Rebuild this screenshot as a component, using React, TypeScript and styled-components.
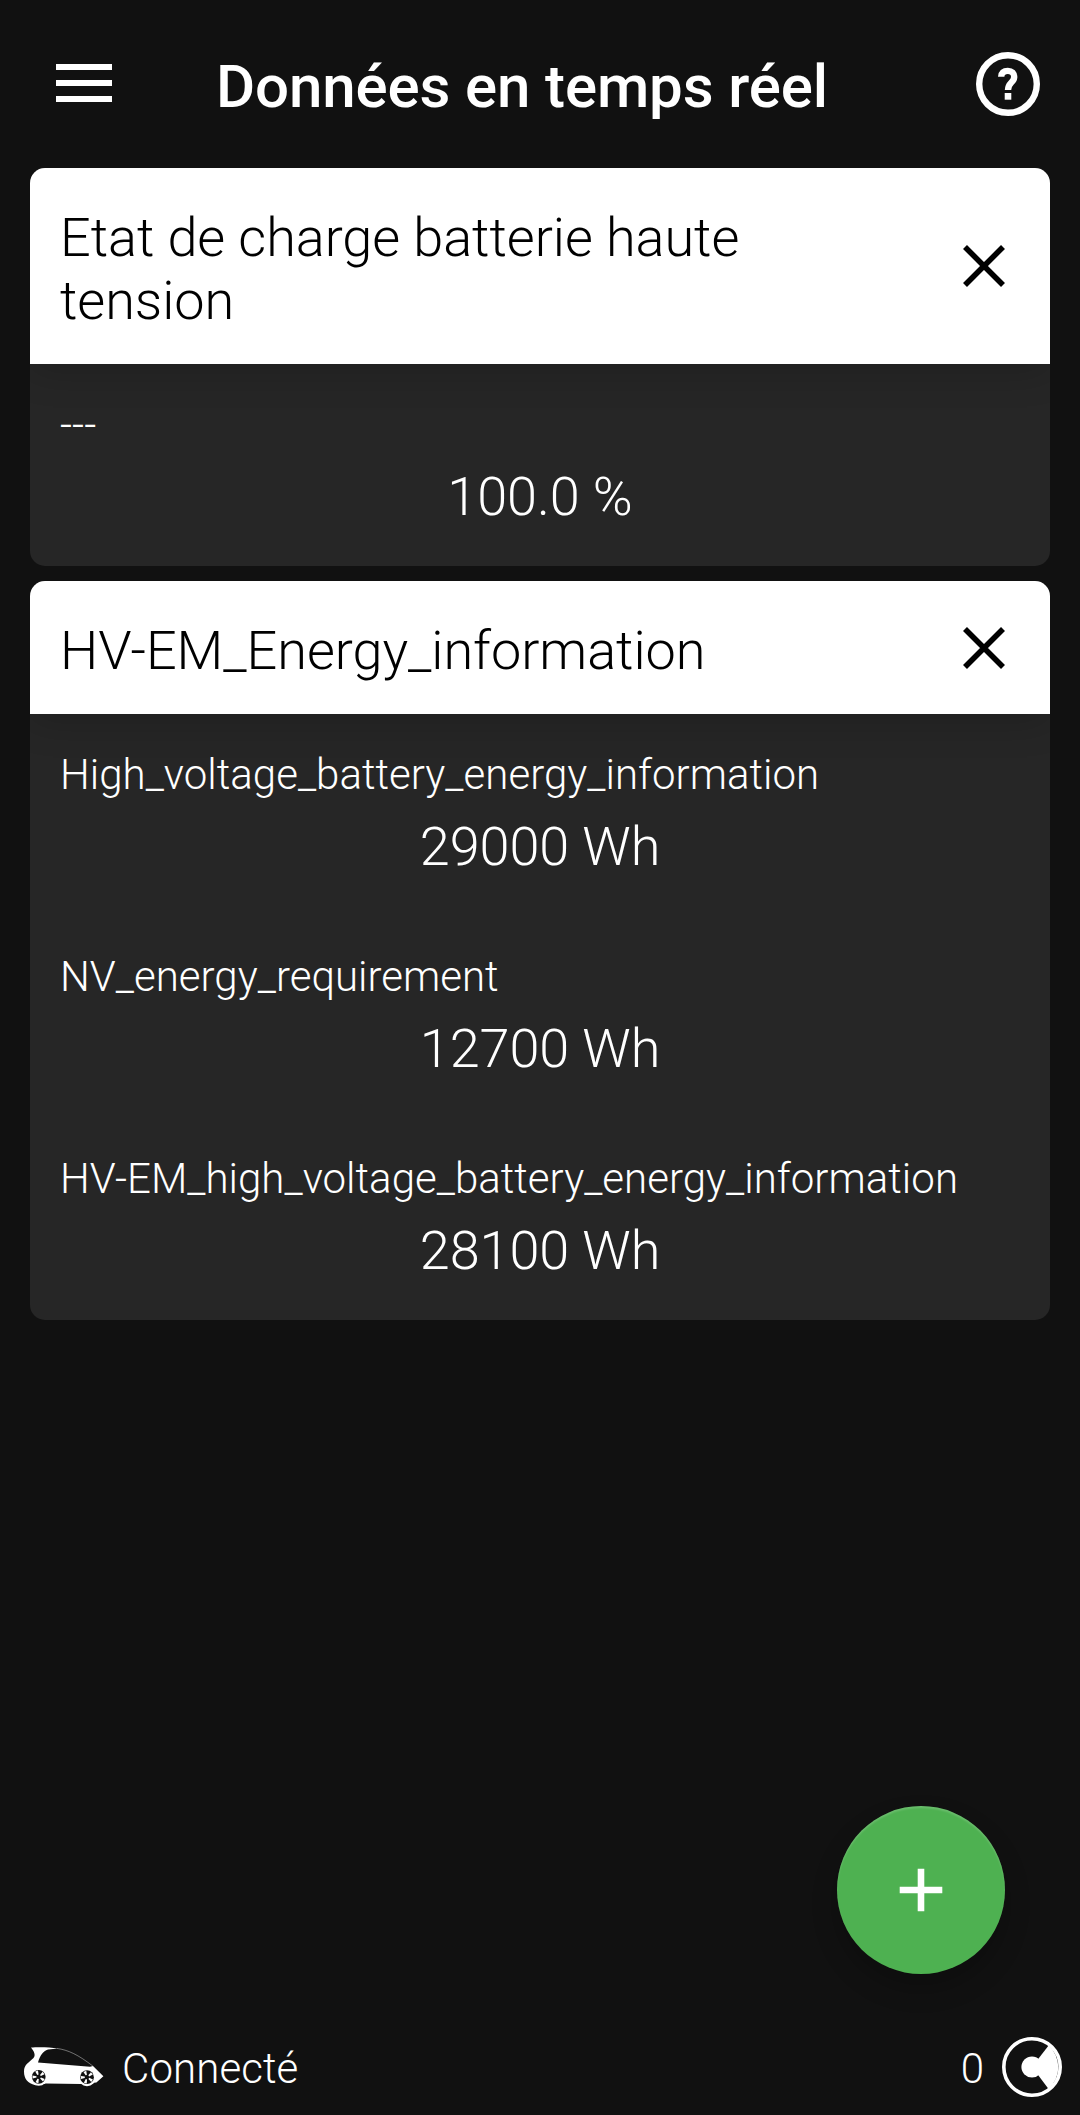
import React from "react";
import styled, { createGlobalStyle } from "styled-components";

const GlobalStyle = createGlobalStyle`
  * { box-sizing: border-box; }
  body {
    margin: 0;
    background: #111111;
    color: #ffffff;
    font-family: Roboto, "Noto Sans", sans-serif;
    font-weight: 300;
  }
`;

const Screen = styled.div`
  position: relative;
  display: flex;
  flex-direction: column;
  width: 1080px;
  height: 2115px;
  background: #111111;
  overflow: hidden;
`;

const TopBar = styled.header`
  display: flex;
  align-items: center;
  justify-content: space-between;
  height: 168px;
  padding: 0 40px 0 56px;
`;

const IconButton = styled.button<{ $lift?: number }>`
  display: flex;
  padding: 0;
  margin-bottom: ${({ $lift = 0 }) => $lift * 2}px;
  border: 0;
  background: none;
  color: inherit;
`;

const Title = styled.h1`
  flex: 1;
  margin: 5px 0 0 104px;
  font-size: 60px;
  line-height: 70px;
  font-weight: 500;
  letter-spacing: -0.13px;
  white-space: nowrap;
`;

const CardList = styled.main`
  flex: 1;
  display: flex;
  flex-direction: column;
  gap: 15px;
  padding: 0 30px;
`;

const Card = styled.section`
  border-radius: 15px;
  background: #262626;
  overflow: hidden;
`;

const CardHeader = styled.div`
  display: flex;
  align-items: center;
  justify-content: space-between;
  padding: 0 45px 0 30px;
  background: #ffffff;
  color: #000000;
  box-shadow: 0 6px 36px rgba(0, 0, 0, 0.2);
`;

const CardTitle = styled.h2`
  width: 780px;
  margin: 0;
  padding: 38px 0 32px;
  font-size: 54px;
  line-height: 63px;
  font-weight: 300;
  letter-spacing: -0.04px;
`;

const CardBody = styled.div`
  display: flex;
  flex-direction: column;
  gap: 74px;
  padding: 36px 30px 38px;
`;

const Label = styled.div`
  font-size: 42px;
  line-height: 49px;
  letter-spacing: 0.025px;
  white-space: nowrap;
`;

const Value = styled.div`
  margin-top: 16px;
  height: 63px;
  font-size: 54px;
  line-height: 63px;
  letter-spacing: -0.06px;
  text-align: center;
`;

const AddButton = styled.button`
  position: absolute;
  left: 837px;
  top: 1806px;
  display: flex;
  align-items: center;
  justify-content: center;
  width: 168px;
  height: 168px;
  padding: 0;
  border: 0;
  border-radius: 50%;
  background: #4eb151;
  box-shadow: 0 14px 26px rgba(0, 0, 0, 0.22), inset 0 2px 2px rgba(255, 255, 255, 0.16);
`;

const StatusBar = styled.footer`
  display: flex;
  align-items: center;
  height: 96px;
  padding: 0 18px 0 23px;
  font-size: 42px;
  line-height: 49px;
`;

const StatusText = styled.span`
  flex: 1;
  margin: 2px 0 0 18px;
  letter-spacing: 0.1px;
`;

const Counter = styled.span`
  margin: 2px 18px 0 0;
`;

const MenuIcon = () => (
  <svg width="56" height="38" viewBox="0 0 56 38" fill="currentColor">
    <path d="M0 0h56v6H0zM0 16h56v6H0zM0 32h56v6H0z" />
  </svg>
);

const HelpIcon = () => (
  <svg width="64" height="64" viewBox="0 0 64 64" fill="none" stroke="currentColor">
    <circle cx="32" cy="32" r="28.8" strokeWidth="6.4" />
    <path
      d="M25.2 24.8C25.2 21 27.6 18.9 31.8 18.9S38.2 21.2 38.2 24.9C38.2 30.6 32 30.4 32 38"
      strokeWidth="6.4"
    />
    <path d="M28.7 41h6.6v6.7h-6.6z" fill="currentColor" stroke="none" />
  </svg>
);

const CloseIcon = () => (
  <svg width="42" height="42" viewBox="0 0 42 42" stroke="currentColor" strokeWidth="5.6">
    <path d="M2 2l38 38M40 2L2 40" />
  </svg>
);

const PlusIcon = () => (
  <svg width="44" height="44" viewBox="0 0 44 44" stroke="#ffffff" strokeWidth="6.6">
    <path d="M.7 22h42.6M22 .7v42.6" />
  </svg>
);

const Wheel = ({ x, y }: { x: number; y: number }) => (
  <g transform={`translate(${x} ${y})`}>
    <circle r="9" fill="#ffffff" />
    <circle r="6.9" fill="#111111" />
    {[-20, 52, 124, 196, 268].map((a) => (
      <path key={a} d="M-1.5-6.2h3L.7-2.2h-1.4z" fill="#ffffff" transform={`rotate(${a})`} />
    ))}
  </g>
);

const CarIcon = () => (
  <svg width="81" height="41" viewBox="0 0 81 41">
    <path
      d="M8 .6C14-.2 26 0 35 1.4L25 2.6C20 4 17 9 15 15.5l52 4.3 3-.8 10.4 10.2-7 6.2L58 37l-35-.6L12 38C5 36.5 1 32 1 24.5c0-7 5-9 9.5-13.5C13 8 11 4.5 8 .6z"
      fill="#ffffff"
    />
    <path d="M34 1.4C45 3 55 7.5 70 19.2" fill="none" stroke="#ffffff" strokeOpacity="0.45" strokeWidth="0.9" />
    <Wheel x={15.7} y={29.8} />
    <Wheel x={64} y={30.2} />
  </svg>
);

const SignalIcon = () => (
  <svg width="60" height="60" viewBox="0 0 60 60">
    <circle cx="30" cy="30" r="28.2" fill="none" stroke="#ffffff" strokeWidth="3.6" />
    <circle cx="30" cy="30" r="10.6" fill="#ffffff" />
    <path d="M30 30L46.6 8.6A29 29 0 0 1 46.6 51.9z" fill="#ffffff" />
  </svg>
);

interface Reading {
  label: string;
  value: string;
}

const groups: { title: string; readings: Reading[] }[] = [
  {
    title: "Etat de charge batterie haute tension",
    readings: [{ label: "---", value: "100.0 %" }],
  },
  {
    title: "HV-EM_Energy_information",
    readings: [
      { label: "High_voltage_battery_energy_information", value: "29000 Wh" },
      { label: "NV_energy_requirement", value: "12700 Wh" },
      { label: "HV-EM_high_voltage_battery_energy_information", value: "28100 Wh" },
    ],
  },
];

export default function App() {
  return (
    <>
      <GlobalStyle />
      <Screen>
        <TopBar>
          <IconButton aria-label="Menu" $lift={1}>
            <MenuIcon />
          </IconButton>
          <Title>Données en temps réel</Title>
          <IconButton aria-label="Aide">
            <HelpIcon />
          </IconButton>
        </TopBar>
        <CardList>
          {groups.map((group) => (
            <Card key={group.title}>
              <CardHeader>
                <CardTitle>{group.title}</CardTitle>
                <IconButton aria-label="Fermer">
                  <CloseIcon />
                </IconButton>
              </CardHeader>
              <CardBody>
                {group.readings.map((reading) => (
                  <div key={reading.label}>
                    <Label>{reading.label}</Label>
                    <Value>{reading.value}</Value>
                  </div>
                ))}
              </CardBody>
            </Card>
          ))}
        </CardList>
        <AddButton aria-label="Ajouter">
          <PlusIcon />
        </AddButton>
        <StatusBar>
          <CarIcon />
          <StatusText>Connecté</StatusText>
          <Counter>0</Counter>
          <SignalIcon />
        </StatusBar>
      </Screen>
    </>
  );
}
